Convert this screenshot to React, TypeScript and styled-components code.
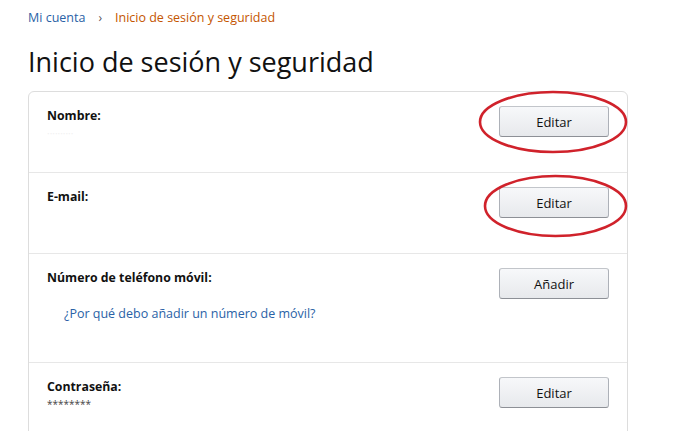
import React from "react";
import styled, { createGlobalStyle } from "styled-components";

const Global = createGlobalStyle`
  html, body { margin: 0; padding: 0; background: #fff; }
  body { font-family: "Open Sans", "Noto Sans", Arial, sans-serif; color: #111; }
`;

const Page = styled.div`
  padding: 9px 0 0 28px;
  width: 600px;
  overflow: hidden;
  height: 422px;
`;

const Crumbs = styled.nav`
  display: flex;
  align-items: center;
  gap: 8px;
  font-size: 12.5px;
  line-height: 18px;
`;

const Crumb = styled.span<{ $active?: boolean }>`
  color: ${(p) => (p.$active ? "#c45500" : "#2a62a6")};
`;

const Sep = styled.span`
  color: #555;
  font-size: 12px;
  padding: 0 5px;
`;

const Title = styled.h1`
  margin: 15px 0 0 0;
  font-size: 27px;
  line-height: 40px;
  font-weight: 400;
  color: #111;
`;

const Card = styled.div`
  margin-top: 9px;
  border: 1px solid #ddd;
  border-radius: 6px;
  display: flex;
  flex-direction: column;
`;

const Row = styled.div<{ $h: number }>`
  height: ${(p) => p.$h}px;
  box-sizing: border-box;
  padding: 14px 18px 0 18px;
  display: flex;
  justify-content: space-between;
  align-items: flex-start;
  & + & { border-top: 1px solid #e7e7e7; }
`;

const Info = styled.div`
  display: flex;
  flex-direction: column;
`;

const Label = styled.div`
  font-size: 12.3px;
  font-weight: 700;
  line-height: 19px;
  color: #111;
`;

const Value = styled.div<{ $faint?: boolean }>`
  font-size: 10px;
  line-height: 15px;
  margin-top: 1px;
  color: ${(p) => (p.$faint ? "#f1f1f1" : "#444")};
`;

const Link = styled.a`
  margin: 17px 0 0 17px;
  font-size: 12.5px;
  line-height: 19px;
  color: #2a62a6;
  text-decoration: none;
`;

const BtnWrap = styled.div`
  position: relative;
`;

const Button = styled.button`
  width: 110px;
  height: 31px;
  box-sizing: border-box;
  border: 1px solid #adb1b8;
  border-top-color: #c2c5ca;
  border-bottom-color: #8d9096;
  border-radius: 3px;
  background: linear-gradient(to bottom, #f7f8fa, #e7e9ec);
  font-family: "Open Sans", "Noto Sans", Arial, sans-serif;
  font-size: 13px;
  color: #111;
  cursor: pointer;
  padding: 0;
`;

const Circle = styled.svg<{ $dx: number; $dy: number }>`
  position: absolute;
  left: ${(p) => p.$dx}px;
  top: ${(p) => p.$dy}px;
  pointer-events: none;
  overflow: visible;
`;

function Mark({ dx, dy, w, h }: { dx: number; dy: number; w: number; h: number }) {
  const rx = w / 2 - 2;
  const ry = h / 2 - 2;
  const cx = w / 2;
  const cy = h / 2;
  return (
    <Circle $dx={dx} $dy={dy} width={w} height={h} viewBox={`0 0 ${w} ${h}`}>
      <ellipse cx={cx} cy={cy} rx={rx} ry={ry} fill="none" stroke="#d0222b" strokeWidth="2.6" />
    </Circle>
  );
}

export default function App() {
  return (
    <>
      <Global />
      <Page>
        <Crumbs>
          <Crumb>Mi cuenta</Crumb>
          <Sep>›</Sep>
          <Crumb $active>Inicio de sesión y seguridad</Crumb>
        </Crumbs>
        <Title>Inicio de sesión y seguridad</Title>
        <Card>
          <Row $h={80}>
            <Info>
              <Label>Nombre:</Label>
              <Value $faint>··········</Value>
            </Info>
            <BtnWrap>
              <Button>Editar</Button>
              <Mark dx={-21} dy={-16} w={150} h={64} />
            </BtnWrap>
          </Row>
          <Row $h={81}>
            <Info>
              <Label>E-mail:</Label>
            </Info>
            <BtnWrap>
              <Button>Editar</Button>
              <Mark dx={-16} dy={-13} w={145} h={64} />
            </BtnWrap>
          </Row>
          <Row $h={109}>
            <Info>
              <Label>Número de teléfono móvil:</Label>
              <Link href="#">¿Por qué debo añadir un número de móvil?</Link>
            </Info>
            <BtnWrap>
              <Button>Añadir</Button>
            </BtnWrap>
          </Row>
          <Row $h={80}>
            <Info>
              <Label>Contraseña:</Label>
              <Value>********</Value>
            </Info>
            <BtnWrap>
              <Button>Editar</Button>
            </BtnWrap>
          </Row>
        </Card>
      </Page>
    </>
  );
}
